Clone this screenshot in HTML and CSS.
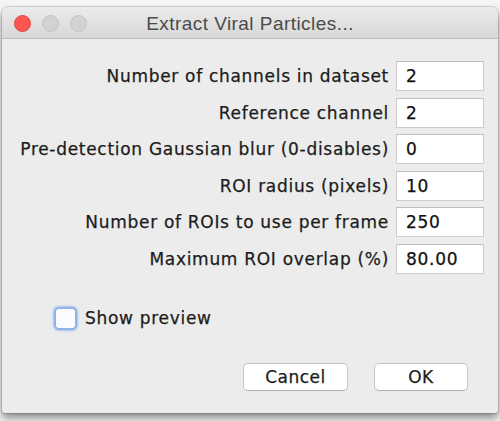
FILE: index.html
```html
<!DOCTYPE html>
<html>
<head>
<meta charset="utf-8">
<link rel="stylesheet" href="styles.css">
</head>
<body>
<div class="window">
  <div class="titlebar">
    <div class="lights">
      <span class="light red"></span>
      <span class="light grey"></span>
      <span class="light grey"></span>
    </div>
    <div class="title">Extract Viral Particles...</div>
    <div></div>
  </div>
  <div class="content">
    <div class="form">
      <label class="label">Number of channels in dataset</label>
      <div class="field">2</div>
      <label class="label">Reference channel</label>
      <div class="field">2</div>
      <label class="label">Pre-detection Gaussian blur (0-disables)</label>
      <div class="field">0</div>
      <label class="label">ROI radius (pixels)</label>
      <div class="field">10</div>
      <label class="label">Number of ROIs to use per frame</label>
      <div class="field">250</div>
      <label class="label">Maximum ROI overlap (%)</label>
      <div class="field">80.00</div>
    </div>
    <div class="check-row">
      <span class="checkbox"></span>
      <span class="check-label">Show preview</span>
    </div>
    <div class="buttons">
      <div class="button cancel">Cancel</div>
      <div class="button ok">OK</div>
    </div>
  </div>
</div>
</body>
</html>
```
FILE: styles.css
```css
html, body {
  margin: 0;
  padding: 0;
}
body {
  width: 500px;
  height: 421px;
  background: #f5f5f5;
  overflow: hidden;
  padding-top: 7px;
  box-sizing: border-box;
}
.window {
  margin-left: 2px;
  width: 496px;
  height: 406px;
  background: #ececec;
  border-radius: 6px 6px 3px 3px;
  box-shadow: 0 5px 9px rgba(0, 0, 0, 0.45), 0 0 0 1px rgba(0, 0, 0, 0.12);
  display: flex;
  flex-direction: column;
  font-family: "DejaVu Sans", "Noto Sans", sans-serif;
}
.titlebar {
  height: 32px;
  box-sizing: border-box;
  border-bottom: 1px solid #bdbdbd;
  background: linear-gradient(#ebebeb, #d8d8d8);
  border-radius: 6px 6px 0 0;
  display: grid;
  grid-template-columns: 1fr auto 1fr;
  align-items: center;
  padding-top: 2px;
}
.lights {
  display: flex;
  gap: 11px;
  padding-left: 12px;
}
.light {
  width: 17px;
  height: 17px;
  border-radius: 50%;
  box-sizing: border-box;
}
.red {
  background: #fc5753;
  border: 1px solid #df4744;
}
.grey {
  background: #d2d2d2;
  border: 1px solid #c3c3c3;
}
.title {
  font-family: "Liberation Sans", Arial, sans-serif;
  font-size: 19px;
  letter-spacing: 0.45px;
  color: #4b4b4b;
}
.content {
  flex: 1;
  display: flex;
  flex-direction: column;
  padding: 22px 14px 22px 14px;
}
.form {
  display: grid;
  grid-template-columns: 1fr 88px;
  grid-auto-rows: 30px;
  column-gap: 7px;
  row-gap: 6.6px;
  align-items: center;
}
.label {
  text-align: right;
  font-size: 17px;
  letter-spacing: 0.7px;
  color: #1c1c1c;
  white-space: nowrap;
  -webkit-text-stroke: 0.25px #1c1c1c;
}
.field {
  height: 30px;
  box-sizing: border-box;
  background: #fff;
  border: 1px solid #cdcdcd;
  border-top-color: #bdbdbd;
  padding-left: 9px;
  font-size: 17px;
  letter-spacing: 0.7px;
  color: #111;
  -webkit-text-stroke: 0.25px #111;
  display: flex;
  align-items: center;
}
.check-row {
  margin-top: 33px;
  padding-left: 38px;
  display: flex;
  align-items: center;
  gap: 8px;
}
.checkbox {
  width: 23px;
  height: 23px;
  box-sizing: border-box;
  border: 2px solid #8fb4ea;
  border-radius: 5px;
  background: #fbfbfd;
  box-shadow: 0 0 2px 1px rgba(120, 160, 230, 0.55);
}
.check-label {
  font-size: 17px;
  letter-spacing: 0.7px;
  color: #1c1c1c;
  -webkit-text-stroke: 0.25px #1c1c1c;
}
.buttons {
  margin-top: auto;
  display: flex;
  justify-content: flex-end;
  gap: 26px;
  padding-right: 16px;
}
.button {
  height: 28px;
  box-sizing: border-box;
  background: #fff;
  border: 1px solid #c6c6c6;
  border-bottom-color: #b0b0b0;
  border-radius: 5px;
  font-size: 17px;
  letter-spacing: 0.5px;
  color: #1c1c1c;
  -webkit-text-stroke: 0.25px #1c1c1c;
  display: flex;
  align-items: center;
  justify-content: center;
}
.cancel {
  width: 105px;
}
.ok {
  width: 94px;
}
```
